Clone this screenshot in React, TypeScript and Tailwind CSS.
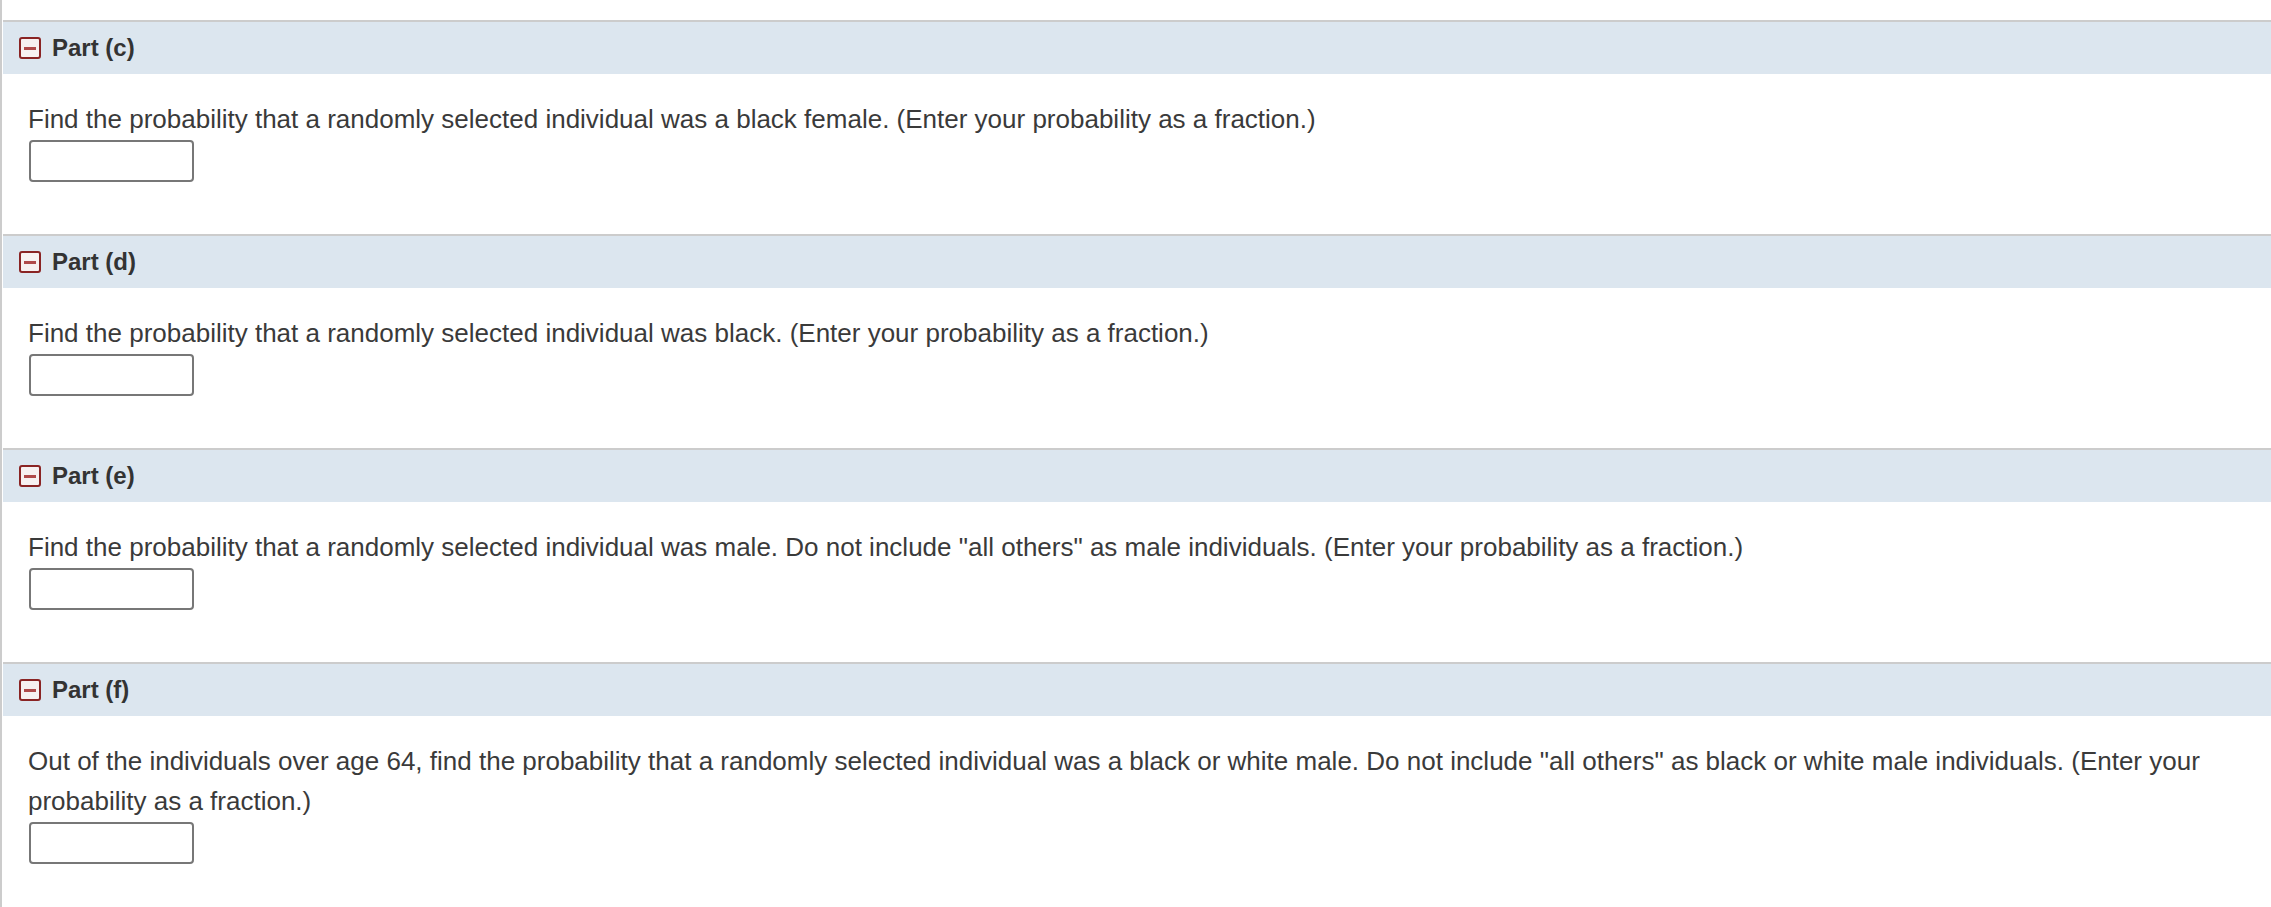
const parts = [
  {
    label: "Part (c)",
    text: "Find the probability that a randomly selected individual was a black female. (Enter your probability as a fraction.)",
  },
  {
    label: "Part (d)",
    text: "Find the probability that a randomly selected individual was black. (Enter your probability as a fraction.)",
  },
  {
    label: "Part (e)",
    text: 'Find the probability that a randomly selected individual was male. Do not include "all others" as male individuals. (Enter your probability as a fraction.)',
  },
  {
    label: "Part (f)",
    text: 'Out of the individuals over age 64, find the probability that a randomly selected individual was a black or white male. Do not include "all others" as black or white male individuals. (Enter your probability as a fraction.)',
  },
];

function CollapseIcon() {
  return (
    <span className="flex h-[22px] w-[22px] shrink-0 items-center justify-center rounded-[3px] border-2 border-[#8a2424] bg-[#f7f1f1]">
      <span className="h-[3px] w-[12px] bg-[#b04a4a]" />
    </span>
  );
}

function PartSection({ label, text }: { label: string; text: string }) {
  return (
    <section className="border-t-2 border-[#cccccc]">
      {/* Header */}
      <div className="flex h-[52px] items-center gap-[11px] bg-[#dce6ef] pl-[16px]">
        <CollapseIcon />
        <span className="text-[24px] font-bold text-[#333333]">{label}</span>
      </div>

      {/* Question */}
      <div className="pb-[52px] pl-[25px] pr-[30px] pt-[25px]">
        <p className="text-[26px] leading-[40px] text-[#3a3a3a]">{text}</p>
        <input
          type="text"
          className="ml-[1px] mt-px block h-[42px] w-[165px] rounded-[4px] border-2 border-[#777777] bg-white outline-none"
        />
      </div>
    </section>
  );
}

export default function App() {
  return (
    <div
      className="min-h-screen border-l-2 border-[#cccccc] bg-white pl-px"
      style={{ fontFamily: '"Liberation Sans", Arial, sans-serif' }}
    >
      <div className="h-[20px]" />
      {parts.map((p) => (
        <PartSection key={p.label} label={p.label} text={p.text} />
      ))}
    </div>
  );
}
